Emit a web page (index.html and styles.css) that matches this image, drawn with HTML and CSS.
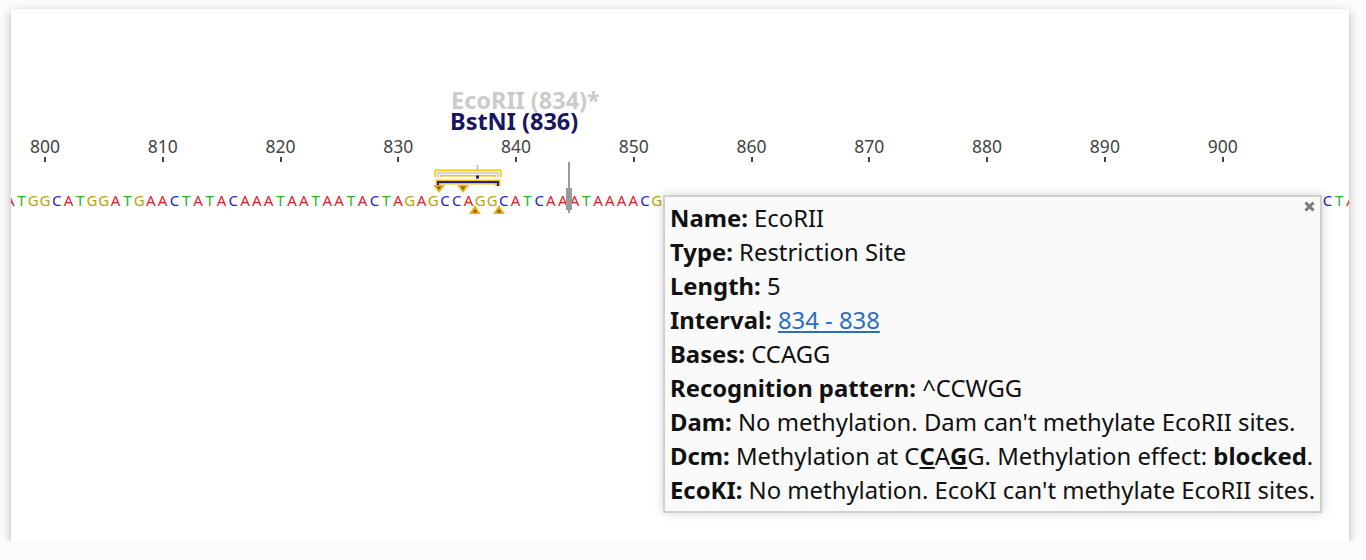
FILE: index.html
```html
<!DOCTYPE html>
<html lang="en">

<head>
    <meta charset="UTF-8">
    <title>Sequence view</title>
    <link rel="stylesheet" href="styles.css">
</head>

<body>
    <div class="panel">
        <!-- regla de posiciones -->
        <div class="ruler" id="ruler"></div>
        <!-- secuencia -->
        <div class="seq" id="seq"></div>

        <!-- etiquetas de enzimas -->
        <div class="site-label ecorii">EcoRII (834)*</div>
        <div class="site-label bstni">BstNI (836)</div>

        <svg class="site-marks" width="90" height="60" viewBox="0 0 90 60">
            <!-- conector -->
            <line x1="47.5" y1="-2" x2="47.5" y2="14" stroke="#cfcfcf" stroke-width="2.5" />
            <!-- contorno amarillo -->
            <path d="M8 12 V8 H68 V12" fill="none" stroke="#f7c600" stroke-width="7" />
            <path d="M8 12 V8 H68 V12" fill="none" stroke="#f4f4f4" stroke-width="4" />
            <path d="M8 12 V8 H68 V12" fill="none" stroke="#d4d4d4" stroke-width="2" />
            <path d="M8 21 V17 H68 V21" fill="none" stroke="#f7c600" stroke-width="5" />
            <path d="M8 21 V17 H68 V21" fill="none" stroke="#1f1d86" stroke-width="2" />
            <rect x="46" y="10.5" width="3" height="3" fill="#1f1d86" />
            <!-- cortes -->
            <g class="cut">
                <polygon points="3,20 15,20 9,28" fill="#e9b51c" />
                <polygon points="6.5,21.5 11.5,21.5 9,25" fill="#7a5a12" />
                <polygon points="27,20 39,20 33,28" fill="#e9b51c" />
                <polygon points="30.5,21.5 35.5,21.5 33,25" fill="#7a5a12" />
                <polygon points="39,49 51,49 45,40" fill="#e9b51c" />
                <polygon points="42.5,47.5 47.5,47.5 45,44" fill="#7a5a12" />
                <polygon points="63,49 75,49 69,40" fill="#e9b51c" />
                <polygon points="66.5,47.5 71.5,47.5 69,44" fill="#7a5a12" />
            </g>
        </svg>

        <div class="cursor"><span class="cursor-grip"></span></div>

        <!-- ventana de informacion -->
        <div class="tooltip">
            <span class="close">
                <svg width="11" height="11" viewBox="0 0 11 11">
                    <path d="M1.5 1.5 L9.5 9.5 M9.5 1.5 L1.5 9.5" stroke="#7a7a7a" stroke-width="3" />
                </svg>
            </span>
            <div class="row"><b>Name:</b> EcoRII</div>
            <div class="row"><b>Type:</b> Restriction Site</div>
            <div class="row"><b>Length:</b> 5</div>
            <div class="row"><b>Interval:</b> <a href="#">834 - 838</a></div>
            <div class="row"><b>Bases:</b> CCAGG</div>
            <div class="row"><b>Recognition pattern:</b> ^CCWGG</div>
            <div class="row"><b>Dam:</b> No methylation. Dam can't methylate EcoRII sites.</div>
            <div class="row"><b>Dcm:</b> Methylation at C<b><u>C</u></b>A<b><u>G</u></b>G. Methylation effect: <b>blocked</b>.</div>
            <div class="row"><b>EcoKI:</b> No methylation. EcoKI can't methylate EcoRII sites.</div>
        </div>
    </div>

    <script>
        // secuencia a partir de la base 797
        const secuencia = "ATGGCATGGATGAACTATACAAATAATAATACTAGAGCCAGGCATCAAATAAAACG" +
            "GATCCATTAGCAGGTACTTAAGCTGATCAAGGTCCTAGGATCAATTGCAAGTACCATGGACTAAT";
        const seq = document.getElementById('seq');
        // las ultimas bases visibles (909, 910) son C y T
        const bases = secuencia.slice(0, 112) + "CTA";
        bases.split('').forEach((b, i) => {
            const s = document.createElement('span');
            s.className = 'base b-' + b;
            // bases tapadas por la ventana de informacion
            if (i > 55 && i < 112) {
                s.classList.add('oculta');
            }
            s.textContent = b;
            seq.appendChild(s);
        });

        const ruler = document.getElementById('ruler');
        for (let n = 800; n <= 900; n += 10) {
            const t = document.createElement('div');
            t.className = 'tick';
            t.innerHTML = '<span class="tick-num">' + n + '</span><span class="tick-mark"></span>';
            ruler.appendChild(t);
        }
    </script>
</body>

</html>
```

FILE: styles.css
```css
body {
    margin: 0;
    background: #fbfbfb;
    font-family: "Noto Sans", "Open Sans", sans-serif;
}

.panel {
    position: relative;
    width: 1338px;
    height: 532px;
    margin: 9px 0 0 11px;
    background: #fff;
    overflow: hidden;
    box-shadow: 0 3px 9px rgba(0, 0, 0, 0.28);
}

.ruler {
    display: flex;
    padding-top: 127px;
    margin-left: -24.9px;
}

.tick {
    flex: 0 0 117.78px;
    display: flex;
    flex-direction: column;
    align-items: center;
}

.tick-num {
    font-size: 17.5px;
    line-height: 21px;
    color: #444;
}

.tick-mark {
    width: 2px;
    height: 5px;
    background: #444;
}

.seq {
    display: flex;
    margin-top: 28px;
    margin-left: -7.2px;
}

.base {
    flex: 0 0 11.778px;
    text-align: center;
    font-size: 15px;
    line-height: 20px;
}

.oculta {
    visibility: hidden;
}

.b-A {
    color: #d8222c;
}

.b-T {
    color: #27b42a;
}

.b-G {
    color: #b9a60a;
}

.b-C {
    color: #2222c4;
}

.site-label {
    position: absolute;
    left: 440px;
    font-size: 23.5px;
    line-height: 21px;
    font-weight: bold;
    white-space: nowrap;
}

.ecorii {
    top: 81px;
    color: #cbcbcb;
}

.bstni {
    top: 102px;
    left: 439px;
    color: #17165e;
}

.site-marks {
    position: absolute;
    left: 419px;
    top: 156px;
}

.cursor {
    position: absolute;
    left: 557px;
    top: 153px;
    width: 2px;
    height: 51px;
    background: #9a9a9a;
}

.cursor-grip {
    position: absolute;
    left: -2px;
    top: 26px;
    width: 6px;
    height: 22px;
    background: #9a9a9a;
}

.tooltip {
    position: absolute;
    left: 652px;
    top: 186px;
    width: 659px;
    height: 318px;
    box-sizing: border-box;
    padding: 4px 4px 0 5px;
    background: #fafafa;
    border: 2px solid #cfcfcf;
    box-shadow: 0 0 10px rgba(0, 0, 0, 0.18);
    white-space: nowrap;
    font-size: 23.85px;
    line-height: 34px;
    color: #111;
}

.tooltip a {
    color: #2a6fbd;
}

.close {
    position: absolute;
    right: 5px;
    top: 4px;
    line-height: 0;
}
```
